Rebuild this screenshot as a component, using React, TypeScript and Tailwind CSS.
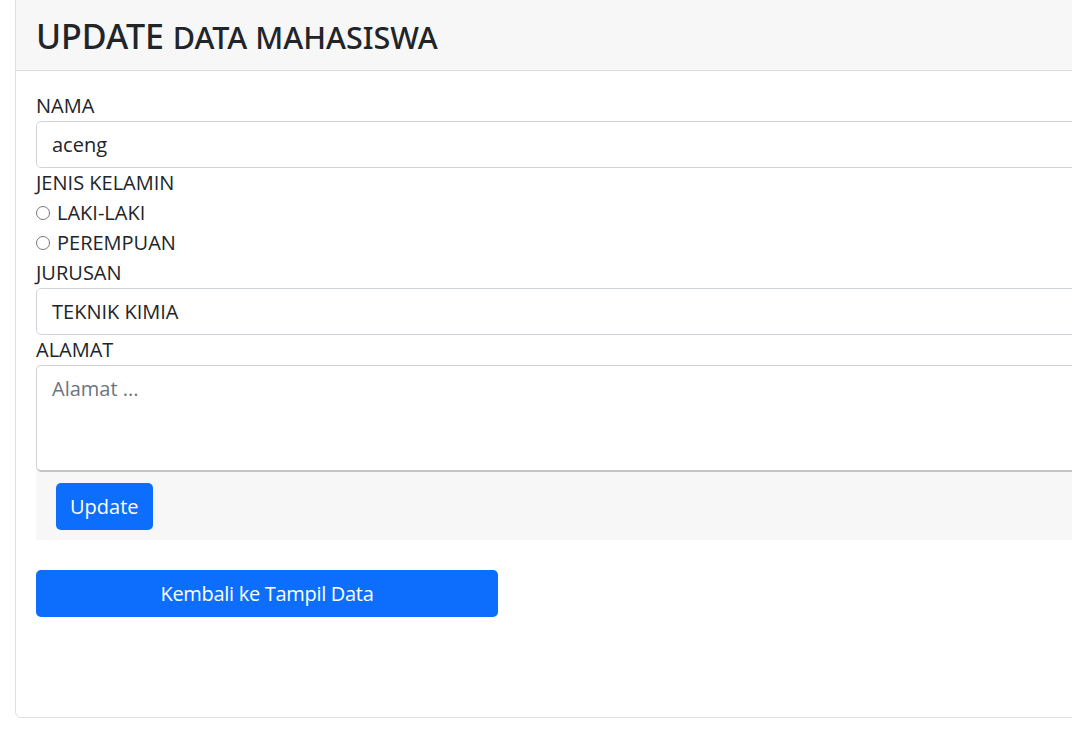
import React from 'react';

export default function App() {
  return (
    <div className="min-h-[732px] bg-white text-[#212529] font-['Open_Sans',sans-serif] text-[20px] leading-[30px]">
      <div className="ml-[15px] mt-[-6px] w-[1100px] h-[724px] border border-[#dfdfdf] rounded-[6px] flex flex-col">
        {/* header */}
        <div className="h-[76px] bg-[#f7f7f7] border-b border-[#dcdcdc] pl-[20px] pt-[7px] flex items-center rounded-t-[6px]">
          <h3 className="font-['Noto_Sans',sans-serif] font-medium text-[34px] leading-[42px]">
            UPDATE <span className="text-[30.5px]">DATA MAHASISWA</span>
          </h3>
        </div>

        {/* body */}
        <div className="px-[20px] pt-[20px] flex flex-col">
          <label>NAMA</label>
          <input
            defaultValue="aceng"
            className="h-[47px] border border-[#ced4da] rounded-[5px] px-[15px] outline-none"
          />
          <label>JENIS KELAMIN</label>
          <div className="flex items-center gap-[7px]">
            <span className="w-[14px] h-[14px] rounded-full border border-[#767676]" />
            <span>LAKI-LAKI</span>
          </div>
          <div className="flex items-center gap-[7px]">
            <span className="w-[14px] h-[14px] rounded-full border border-[#767676]" />
            <span>PEREMPUAN</span>
          </div>
          <label>JURUSAN</label>
          <input
            defaultValue="TEKNIK KIMIA"
            className="h-[47px] border border-[#ced4da] rounded-[5px] px-[15px] outline-none"
          />
          <label>ALAMAT</label>
          <textarea
            placeholder="Alamat ..."
            className="h-[107px] border border-[#ced4da] border-b-[#c4c4c4] border-b-2 rounded-[5px] px-[15px] py-[8px] outline-none resize-none placeholder:text-[#6c757d]"
          />
          <div className="bg-[#f7f7f7] h-[68px] pl-[20px] pt-[11px]">
            <button className="h-[47px] px-[14px] rounded-[5px] bg-[#0d6efd] text-white">Update</button>
          </div>
          <button className="mt-[30px] w-[462px] h-[47px] rounded-[5px] bg-[#0d6efd] text-white tracking-[-0.3px]">
            Kembali ke Tampil Data
          </button>
        </div>
      </div>
    </div>
  );
}
